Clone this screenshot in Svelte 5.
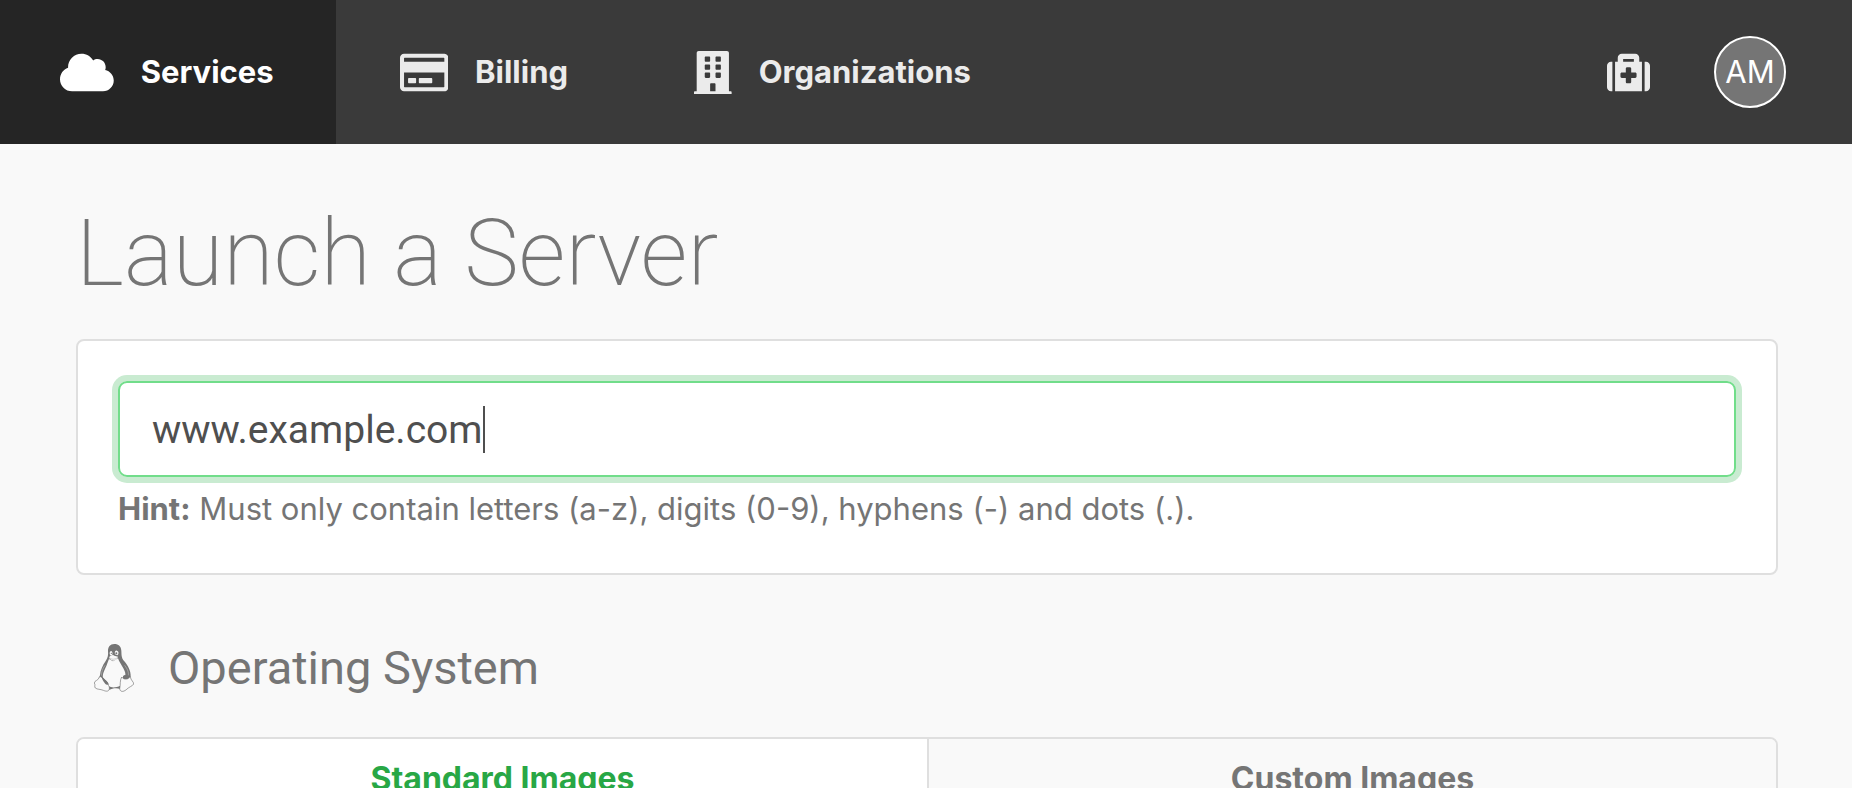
<script>
  let hostname = $state('www.example.com');
  let tab = $state('standard');
</script>

<header>
  <nav aria-label="Main">
    <a class="item active" href="#services" aria-current="page">
      <svg class="icon" viewBox="0 0 640 512" aria-hidden="true"><path d="M537.6 226.6c4.1-10.7 6.4-22.4 6.4-34.6 0-53-43-96-96-96-19.7 0-38.1 6-53.3 16.2C367 64.2 315.3 32 256 32c-88.4 0-160 71.6-160 160 0 2.7.1 5.4.2 8.1C40.2 219.8 0 273.2 0 336c0 79.5 64.5 144 144 144h368c70.7 0 128-57.3 128-128 0-61.9-44-113.6-102.4-125.4z" /></svg>
      <span>Services</span>
    </a>
    <a class="item" href="#billing">
      <svg class="icon" viewBox="0 0 576 512" aria-hidden="true"><path d="M527.9 32H48.1C21.5 32 0 53.5 0 80v352c0 26.5 21.5 48 48.1 48h479.8c26.6 0 48.1-21.5 48.1-48V80c0-26.5-21.5-48-48.1-48zM54.1 80h467.8c3.3 0 6 2.7 6 6v42H48.1V86c0-3.3 2.7-6 6-6zm467.8 352H54.1c-3.3 0-6-2.7-6-6V256h479.8v170c0 3.3-2.7 6-6 6zM192 332v40c0 6.6-5.4 12-12 12h-72c-6.6 0-12-5.4-12-12v-40c0-6.6 5.4-12 12-12h72c6.6 0 12 5.4 12 12zm192 0v40c0 6.6-5.4 12-12 12H236c-6.6 0-12-5.4-12-12v-40c0-6.6 5.4-12 12-12h136c6.6 0 12 5.4 12 12z" /></svg>
      <span>Billing</span>
    </a>
    <a class="item" href="#organizations">
      <svg class="icon" viewBox="0 0 448 512" aria-hidden="true"><path d="M436 480h-20V24c0-13.255-10.745-24-24-24H56C42.745 0 32 10.745 32 24v456H12c-6.627 0-12 5.373-12 12v20h448v-20c0-6.627-5.373-12-12-12zM128 76c0-6.627 5.373-12 12-12h40c6.627 0 12 5.373 12 12v40c0 6.627-5.373 12-12 12h-40c-6.627 0-12-5.373-12-12V76zm0 96c0-6.627 5.373-12 12-12h40c6.627 0 12 5.373 12 12v40c0 6.627-5.373 12-12 12h-40c-6.627 0-12-5.373-12-12v-40zm52 148h-40c-6.627 0-12-5.373-12-12v-40c0-6.627 5.373-12 12-12h40c6.627 0 12 5.373 12 12v40c0 6.627-5.373 12-12 12zm76 160h-64v-84c0-6.627 5.373-12 12-12h40c6.627 0 12 5.373 12 12v84zm64-172c0 6.627-5.373 12-12 12h-40c-6.627 0-12-5.373-12-12v-40c0-6.627 5.373-12 12-12h40c6.627 0 12 5.373 12 12v40zm0-96c0 6.627-5.373 12-12 12h-40c-6.627 0-12-5.373-12-12v-40c0-6.627 5.373-12 12-12h40c6.627 0 12 5.373 12 12v40zm0-96c0 6.627-5.373 12-12 12h-40c-6.627 0-12-5.373-12-12V76c0-6.627 5.373-12 12-12h40c6.627 0 12 5.373 12 12v40z" /></svg>
      <span>Organizations</span>
    </a>
  </nav>
  <div class="tools">
    <a class="help" href="#support" aria-label="Support">
      <svg class="icon" viewBox="0 0 512 512" aria-hidden="true"><path d="M96 480h320V128h-32V80c0-26.5-21.5-48-48-48H176c-26.5 0-48 21.5-48 48v48H96v352zm96-384h128v32H192V96zm320 80v256c0 26.5-21.5 48-48 48h-16V128h16c26.5 0 48 21.5 48 48zM64 480H48c-26.5 0-48-21.5-48-48V176c0-26.5 21.5-48 48-48h16v352zm288-208v32c0 8.8-7.2 16-16 16h-48v48c0 8.8-7.2 16-16 16h-32c-8.8 0-16-7.2-16-16v-48h-48c-8.8 0-16-7.2-16-16v-32c0-8.8 7.2-16 16-16h48v-48c0-8.8 7.2-16 16-16h32c8.8 0 16 7.2 16 16v48h48c8.8 0 16 7.2 16 16z" /></svg>
    </a>
    <button class="avatar" type="button">AM</button>
  </div>
</header>

<main>
  <h1>Launch a Server</h1>

  <section class="card">
    <label class="field">
      <input type="text" bind:value={hostname} aria-label="Hostname" aria-describedby="hint" spellcheck="false" />
      <span class="caret"></span>
    </label>
    <p id="hint"><strong>Hint:</strong> Must only contain letters (a-z), digits (0-9), hyphens (-) and dots (.).</p>
  </section>

  <h2>
    <svg class="tux" viewBox="27 27 120 144" aria-hidden="true">
      <path class="solid" d="M88 27C75 27 69 36 69 48C70 60 69 68 62 78C53 91 46 106 45 121L42 128L48 130L64 147L72 150C68 137 55 134 53 125C54 111 61 101 65 91C68 82 70 77 72 72L84 79L99 70C103 82 109 89 115 100C120 110 122 116 121 121C114 122 111 128 116 132C122 136 130 133 132 128L137 125C138 108 128 91 118 79C108 67 110 59 109 47C108 34 101 27 88 27Z" />
      <path class="solid" d="M71 154C81 159 94 158 106 152L105 162C95 158 81 160 73 165Z" />
      <path class="light" d="M75 50C79 45 84 51 82 59L78 62C74 59 73 54 75 50ZM90 58C88 50 91 46 96 47C102 49 102 57 97 61Z" />
      <path class="light" d="M72 67C78 61 84 58 88 62L99 65C99 70 91 76 85 77C79 77 73 72 72 67Z" />
      <circle class="solid" cx="79" cy="55" r="2" /><circle class="solid" cx="94" cy="55" r="3" />
      <path class="line" d="M73 67C80 75 89 74 99 67" />
      <path class="gap" d="M60 91C52 102 49 112 50 122M119 91C129 104 131 113 130 121" />
      <path class="paw" d="M43 126C48 122 53 130 58 137C64 147 75 151 73 162C71 171 62 169 55 166C46 162 37 164 31 159C27 155 32 150 28 144C28 136 41 137 43 126Z" />
      <path class="paw" d="M110 126C104 136 107 150 104 162C107 174 119 169 126 162C132 156 143 153 146 147C147 141 137 136 136 125C131 133 117 136 110 126Z" />
      <path class="solid" d="M50 122C56 132 68 138 70 145C69 150 63 151 59 144C55 138 49 130 50 122Z" />
      <ellipse class="solid" cx="122" cy="126" rx="8" ry="6" />
    </svg>
    <span>Operating System</span>
  </h2>

  <div class="tabs" role="tablist" aria-label="Operating System">
    <button type="button" role="tab" aria-selected={tab === 'standard'} onclick={() => (tab = 'standard')}>Standard Images</button>
    <button type="button" role="tab" aria-selected={tab === 'custom'} onclick={() => (tab = 'custom')}>Custom Images</button>
  </div>
</main>

<style>
  :global(body) {
    background: #f9f9f9;
    color: #757575;
    font-family: Inter, 'Liberation Sans', sans-serif;
    font-size: 31px;
    line-height: 48px;
    overflow: hidden;
  }
  header {
    display: flex;
    justify-content: space-between;
    background: #3a3a3a;
    color: #ebebeb;
  }
  nav { display: flex; }
  .item {
    display: flex;
    align-items: center;
    gap: 27px;
    padding: 48px 62px 48px 64px;
    color: inherit;
    font-weight: 700;
    text-decoration: none;
  }
  .item.active { padding-left: 60px; background: #252525; color: #fff; }
  .icon { display: block; height: 43px; fill: currentColor; }
  .tools { display: flex; align-items: center; gap: 64px; padding-right: 66px; }
  .help { color: inherit; }
  .avatar {
    width: 72px;
    height: 72px;
    padding: 0;
    border: 2px solid #fff;
    border-radius: 50%;
    background: #757575;
    color: #fff;
    font: inherit;
  }
  main { padding: 56px 74px 0 76px; }
  h1 {
    margin: 0 0 32px;
    font-family: Roboto, Inter, sans-serif;
    font-size: 92px;
    font-weight: 200;
    line-height: 107px;
  }
  .card {
    padding: 40px;
    border: 2px solid #dfdfdf;
    border-radius: 8px;
    background: #fff;
  }
  .field {
    display: flex;
    align-items: center;
    padding: 22px 32px;
    border: 2px solid #71dd8a;
    border-radius: 9px;
    box-shadow: 0 0 0 6px #c9ebd1;
    cursor: text;
  }
  input {
    field-sizing: content;
    min-width: 2px;
    padding: 2px 0 0;
    border: 0;
    outline: 0;
    background: none;
    color: #4f4f4f;
    caret-color: transparent;
    font: inherit;
    font-family: Roboto, Inter, sans-serif;
    font-size: 39px;
    line-height: 46px;
  }
  .caret { width: 2px; height: 47px; background: #4f4f4f; }
  p { margin: 8px 0 0; }
  strong { font-weight: 700; }
  h2 {
    display: flex;
    align-items: center;
    gap: 34px;
    margin: 64px 0 40px;
    padding-left: 18px;
    font-family: Roboto, Inter, sans-serif;
    font-size: 47px;
    font-weight: 400;
    line-height: 58px;
  }
  .tux { width: 40px; height: 48px; }
  .solid { fill: #757575; }
  .light { fill: #f9f9f9; }
  .line { fill: none; stroke: #757575; stroke-width: 1; }
  .gap { fill: none; stroke: #f9f9f9; stroke-width: 1; }
  .paw { fill: #f9f9f9; stroke: #757575; stroke-width: 2; }
  .tabs {
    display: grid;
    grid-template-columns: 1fr 1fr;
    border: 2px solid #dfdfdf;
    border-radius: 8px;
    overflow: hidden;
  }
  .tabs button {
    padding: 16px;
    border: 0;
    background: #f9f9f9;
    color: #757575;
    font: inherit;
    font-size: 32px;
    font-weight: 700;
  }
  .tabs button + button { border-left: 2px solid #dfdfdf; }
  .tabs button[aria-selected='true'] { background: #fff; color: #28a745; }
</style>
